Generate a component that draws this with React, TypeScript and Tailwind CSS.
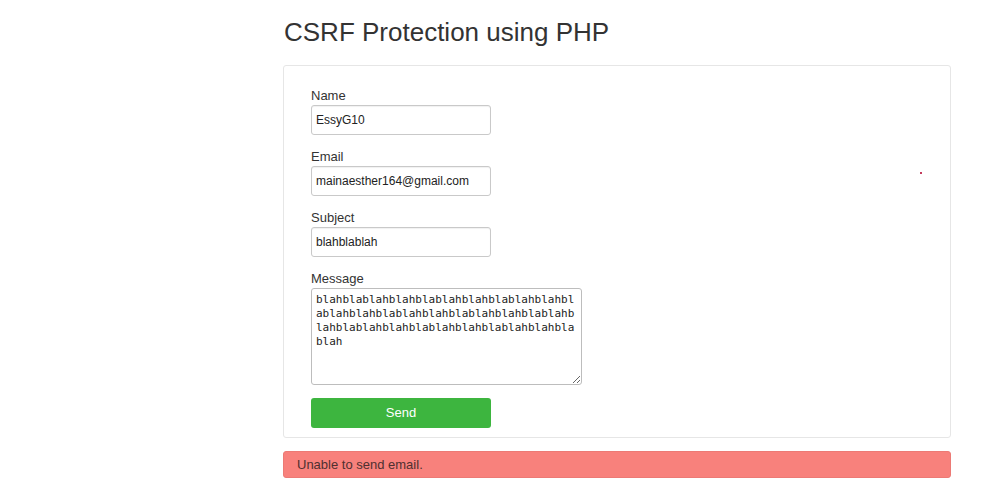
import { useState } from "react";

const message =
  "blahblablahblahblablahblahblablahblahblablahblahblablahblahblablahblahblablahblahblablahblahblablahblahblablahblahblablah";

interface FieldProps {
  label: string;
  value: string;
  onChange: (v: string) => void;
}

function Field({ label, value, onChange }: FieldProps) {
  return (
    <div className="flex flex-col">
      <label className="text-[13px] leading-[18px] text-[#333]">{label}</label>
      <input
        value={value}
        onChange={(e) => onChange(e.target.value)}
        className="w-[180px] h-[30px] px-[4px] border border-[#c9c9c9] rounded-[3px] text-[12px] text-[#222] bg-white shadow-[inset_0_1px_1px_rgba(0,0,0,0.06)] outline-none"
      />
    </div>
  );
}

export default function App() {
  const [name, setName] = useState("EssyG10");
  const [email, setEmail] = useState("mainaesther164@gmail.com");
  const [subject, setSubject] = useState("blahblablah");
  const [body, setBody] = useState(message);

  return (
    <div
      className="min-h-[500px] bg-white pl-[283px] pt-[16px]"
      style={{ fontFamily: '"Liberation Sans", Arial, sans-serif' }}
    >
      <div className="w-[668px]">
        <h1 className="text-[26px] leading-[32px] text-[#333] font-normal pl-[1px]">
          CSRF Protection using PHP
        </h1>

        {/* Form card */}
        <div className="relative mt-[17px] border border-[#e6e6e6] rounded-[3px] pt-[21px] pb-[9px] pl-[27px] flex flex-col gap-[13px]">
          <Field label="Name" value={name} onChange={setName} />
          <Field label="Email" value={email} onChange={setEmail} />
          <Field label="Subject" value={subject} onChange={setSubject} />

          <div className="flex flex-col">
            <label className="text-[13px] leading-[18px] text-[#333]">Message</label>
            <textarea
              value={body}
              onChange={(e) => setBody(e.target.value)}
              className="w-[271px] h-[97px] pl-[4px] pr-[2px] pt-[4px] border border-[#bdbdbd] rounded-[3px] text-[11px] leading-[14px] text-[#222] bg-white outline-none break-all"
              style={{ fontFamily: '"DejaVu Sans Mono", "Liberation Mono", monospace' }}
            />
          </div>

          <button className="w-[180px] h-[30px] bg-[#3db53f] rounded-[3px] text-white text-[13px]">
            Send
          </button>

          <span className="absolute left-[636px] top-[106px] w-[2px] h-[2px] bg-[#c43b5c]" />
        </div>

        {/* Error alert */}
        <div className="mt-[13px] h-[27px] flex items-center pl-[13px] bg-[#f8817c] border border-[#ec7a75] rounded-[3px] text-[13px] text-[#4f3030]">
          Unable to send email.
        </div>
      </div>
    </div>
  );
}
